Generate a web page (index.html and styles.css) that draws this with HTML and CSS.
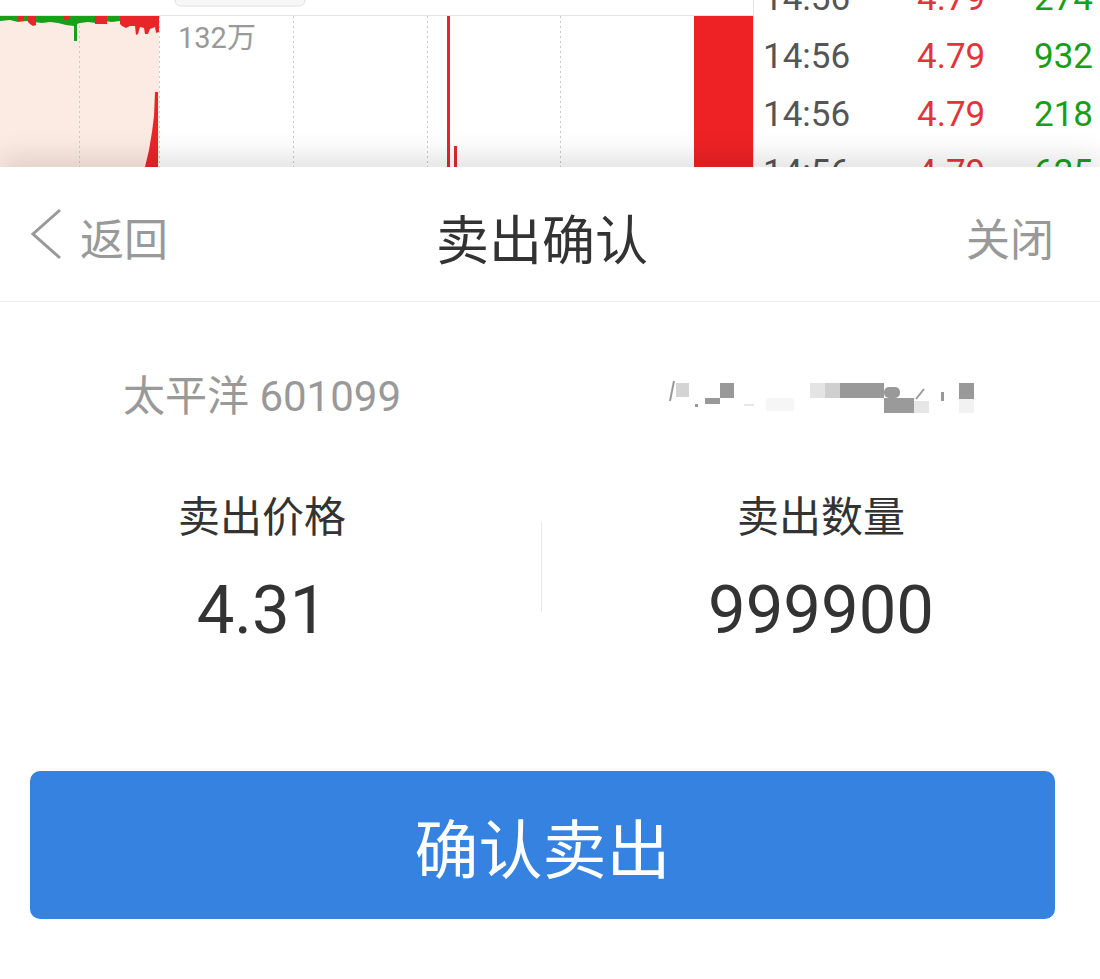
FILE: index.html
```html
<!DOCTYPE html>
<html lang="zh-CN">
<head>
    <meta charset="UTF-8">
    <meta name="viewport" content="width=device-width, initial-scale=1.0">
    <title>卖出确认</title>
    <link rel="stylesheet" href="styles.css">
</head>
<body>
    <!-- 背后的行情页，只露出一截 -->
    <div class="market">
        <svg class="chart" width="753" height="167" viewBox="0 0 753 167">
            <rect x="175" y="-10" width="130" height="16" rx="6" fill="#f7f7f7" stroke="#e0e0e0"/>
            <line x1="0" y1="15.5" x2="753" y2="15.5" stroke="#e4e4e4"/>
            <g transform="translate(0,16)">
                <rect x="0" y="0" width="159" height="151" fill="#fcebe3"/>
                <g stroke="#c9c9c9" stroke-dasharray="2 3">
                    <line x1="79.5" y1="0" x2="79.5" y2="151"/>
                    <line x1="159.5" y1="0" x2="159.5" y2="151"/>
                    <line x1="293.5" y1="0" x2="293.5" y2="151"/>
                    <line x1="427.5" y1="0" x2="427.5" y2="151"/>
                    <line x1="560.5" y1="0" x2="560.5" y2="151"/>
                </g>
                <polygon fill="#18a018" points="0,0 120,0 120,5 112,6 104,5 96,7 88,6 80,7 77,8 77,25 74,25 74,10 66,9 58,7 50,6 42,7 34,6 26,5 18,6 10,4 0,5"/>
                <g fill="#e8262a">
                    <polygon points="18,0 24,0 24,5 18,5"/>
                    <polygon points="28,0 36,0 36,9 33,10 30,8 28,6"/>
                    <polygon points="64,0 70,0 70,4 64,4"/>
                    <polygon points="95,0 107,0 107,8 95,8"/>
                    <polygon points="120,0 159,0 159,16 156,17 155,11 150,13 148,18 145,18 144,12 140,11 138,18 136,19 135,10 130,10 126,12 122,10 120,8"/>
                    <polygon points="145,151 149,134 152,116 154,100 155,76 158,76 158,151"/>
                </g>
                <text x="178" y="32" font-size="29" fill="#999">132万</text>
                <rect x="447" y="0" width="3" height="151" fill="#e0282e"/>
                <rect x="454" y="130" width="3" height="21" fill="#e0282e"/>
                <rect x="694" y="0" width="59" height="151" fill="#ee2224"/>
            </g>
        </svg>
        <div class="ticks">
            <div class="tick"><span class="tick-time">14:56</span><span class="tick-price">4.79</span><span class="tick-vol">274</span></div>
            <div class="tick"><span class="tick-time">14:56</span><span class="tick-price">4.79</span><span class="tick-vol">932</span></div>
            <div class="tick"><span class="tick-time">14:56</span><span class="tick-price">4.79</span><span class="tick-vol">218</span></div>
            <div class="tick"><span class="tick-time">14:56</span><span class="tick-price">4.79</span><span class="tick-vol">625</span></div>
        </div>
    </div>

    <div class="sheet">
        <div class="sheet-header">
            <a class="back">
                <svg width="32" height="52" viewBox="0 0 32 52"><polyline points="30,2 3,26 30,50" fill="none" stroke="#999" stroke-width="3"/></svg>
                返回
            </a>
            <h1 class="title">卖出确认</h1>
            <a class="close">关闭</a>
        </div>

        <div class="cols stock">
            <div class="col stock-name">太平洋 601099</div>
            <div class="col account">
                <!-- 打了马赛克的股东账号 -->
                <svg width="310" height="36" viewBox="0 0 310 36">
                    <line x1="4" y1="22" x2="8" y2="2" stroke="#999" stroke-width="2"/>
                    <rect x="10" y="4" width="13" height="14" fill="#d4d4d4"/>
                    <rect x="54" y="4" width="14" height="15" fill="#999"/>
                    <rect x="39" y="19" width="15" height="6" fill="#999"/>
                    <rect x="29" y="25" width="3" height="3" fill="#999"/>
                    <rect x="78" y="25" width="10" height="2" fill="#e6e6e6"/>
                    <rect x="100" y="19" width="28" height="13" fill="#f6f6f6"/>
                    <rect x="144" y="4" width="15" height="15" fill="#e4e4e4"/>
                    <rect x="159" y="4" width="15" height="15" fill="#cfcfcf"/>
                    <rect x="174" y="4" width="44" height="15" fill="#999"/>
                    <rect x="218" y="8" width="16" height="11" rx="5" fill="#999"/>
                    <rect x="218" y="19" width="30" height="15" fill="#9a9a9a"/>
                    <rect x="248" y="22" width="15" height="12" fill="#e6e6e6"/>
                    <line x1="250" y1="20" x2="258" y2="10" stroke="#999" stroke-width="2"/>
                    <rect x="275" y="13" width="3" height="9" fill="#999"/>
                    <rect x="293" y="4" width="15" height="16" fill="#999"/>
                    <rect x="293" y="20" width="15" height="14" fill="#f2f2f2"/>
                </svg>
            </div>
        </div>

        <div class="cols order">
            <div class="col">
                <div class="label">卖出价格</div>
                <div class="value">4.31</div>
            </div>
            <div class="divider"></div>
            <div class="col">
                <div class="label">卖出数量</div>
                <div class="value">999900</div>
            </div>
        </div>

        <button class="confirm">确认卖出</button>
    </div>
</body>
</html>
```

FILE: styles.css
```css
body {
    margin: 0;
    width: 1100px;
    height: 979px;
    overflow: hidden;
    font-family: Roboto, "Noto Sans CJK SC", sans-serif;
    background-color: #fff;
}

/* 行情页 */
.market {
    display: flex;
    height: 167px;
    overflow: hidden;
}
.chart {
    display: block;
    flex: none;
}
.ticks {
    flex: 1;
    align-self: flex-start;
    margin-top: -30px;
    border-left: 1px solid #e4e4e4;
}
.tick {
    display: grid;
    grid-template-columns: 154px 1fr auto;
    height: 58px;
    line-height: 58px;
    padding: 0 7px 0 9px;
    font-size: 35px;
}
.tick-time {
    color: #555;
}
.tick-price {
    color: #e3343a;
}
.tick-vol {
    color: #17a017;
}

/* 确认弹层 */
.sheet {
    position: relative;
    height: 812px;
    background-color: #fff;
    box-shadow: 0 -10px 26px rgba(0, 0, 0, 0.12);
}
.sheet-header {
    display: grid;
    grid-template-columns: 1fr auto 1fr;
    align-items: center;
    height: 128px;
    padding: 6px 46px 0 30px;
    border-bottom: 1px solid #ececec;
}
.back {
    display: flex;
    align-items: center;
    gap: 18px;
    font-size: 44px;
    color: #999;
}
.back svg {
    display: block;
    margin-top: -6px;
}
.title {
    margin: 0;
    font-size: 53px;
    font-weight: normal;
    color: #333;
}
.close {
    justify-self: end;
    font-size: 44px;
    color: #999;
}

.cols {
    display: flex;
    align-items: center;
}
.col {
    flex: none;
    width: 524px;
    text-align: center;
}
.col:last-child {
    flex: 1;
    width: auto;
    margin-left: 18px;
}
.divider + .col {
    margin-left: 0;
}
.divider {
    flex: none;
    width: 1px;
    height: 90px;
    margin: -6px 0 0 17px;
    background-color: #e8e8e8;
}

.stock {
    margin-top: 65px;
    height: 60px;
}
.stock-name {
    font-size: 42px;
    line-height: 60px;
    color: #999;
}
.account svg {
    display: block;
    margin: 0 auto;
}

.order {
    margin-top: 63px;
}
.label {
    font-size: 42px;
    line-height: 56px;
    color: #333;
}
.value {
    margin-top: 24px;
    font-size: 67px;
    line-height: 80px;
    color: #333;
}

.confirm {
    display: block;
    width: 1025px;
    height: 148px;
    margin: 121px 0 0 30px;
    border: none;
    border-radius: 10px;
    background-color: #3582e0;
    color: #fff;
    font-family: inherit;
    font-size: 64px;
}
```
